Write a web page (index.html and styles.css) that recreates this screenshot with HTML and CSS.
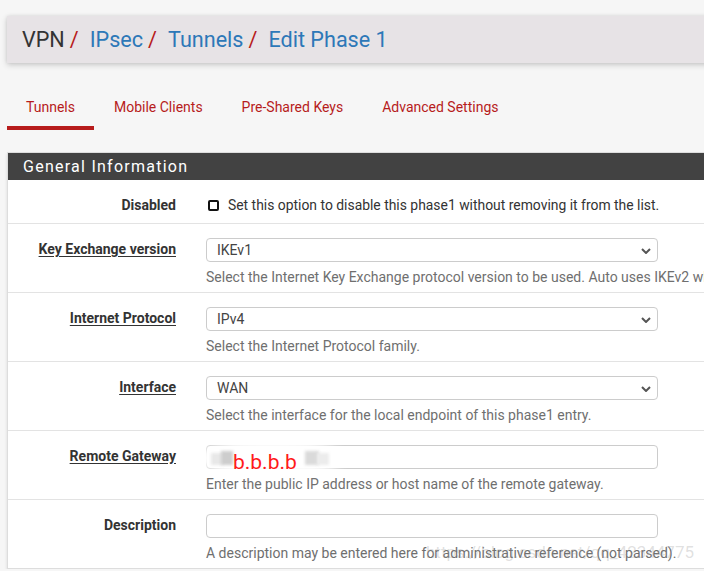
FILE: index.html
```html
<!DOCTYPE html>
<html>
<head>
<meta charset="utf-8">
<link rel="stylesheet" href="styles.css">
</head>
<body>
<div class="page">
  <header class="crumbs">
    <h1><span class="dark">VPN</span><span class="sep">/</span><a href="#">IPsec</a><span class="sep">/</span><a href="#">Tunnels</a><span class="sep">/</span><a href="#">Edit Phase 1</a></h1>
  </header>

  <nav class="tabs">
    <a class="tab active" href="#">Tunnels</a>
    <a class="tab" href="#">Mobile Clients</a>
    <a class="tab" href="#">Pre-Shared Keys</a>
    <a class="tab" href="#">Advanced Settings</a>
  </nav>

  <section class="panel">
    <h2 class="panel-head">General Information</h2>
    <div class="panel-body">
      <div class="row row-short">
        <div class="label">Disabled</div>
        <div class="field">
          <label class="check"><span class="box"></span>Set this option to disable this phase1 without removing it from the list.</label>
        </div>
      </div>
      <div class="row">
        <div class="label"><span class="ul">Key Exchange version</span></div>
        <div class="field">
          <div class="select">IKEv1<svg class="chev" viewBox="0 0 10 6" width="10" height="6"><path d="M1 1 L5 5 L9 1" fill="none" stroke="#555" stroke-width="2"/></svg></div>
          <div class="help">Select the Internet Key Exchange protocol version to be used. Auto uses IKEv2 when initiator, and accepts either IKEv1 or IKEv2 as responder.</div>
        </div>
      </div>
      <div class="row">
        <div class="label"><span class="ul">Internet Protocol</span></div>
        <div class="field">
          <div class="select">IPv4<svg class="chev" viewBox="0 0 10 6" width="10" height="6"><path d="M1 1 L5 5 L9 1" fill="none" stroke="#555" stroke-width="2"/></svg></div>
          <div class="help">Select the Internet Protocol family.</div>
        </div>
      </div>
      <div class="row">
        <div class="label"><span class="ul">Interface</span></div>
        <div class="field">
          <div class="select">WAN<svg class="chev" viewBox="0 0 10 6" width="10" height="6"><path d="M1 1 L5 5 L9 1" fill="none" stroke="#555" stroke-width="2"/></svg></div>
          <div class="help">Select the interface for the local endpoint of this phase1 entry.</div>
        </div>
      </div>
      <div class="row">
        <div class="label"><span class="ul">Remote Gateway</span></div>
        <div class="field">
          <div class="input gw">
            <span class="smudge"></span>
            <span class="blk b1"></span><span class="blk b2"></span><span class="blk b3"></span><span class="blk b4"></span>
            <span class="redtxt">b.b.b.b</span>
          </div>
          <div class="help">Enter the public IP address or host name of the remote gateway.</div>
        </div>
      </div>
      <div class="row">
        <div class="label">Description</div>
        <div class="field">
          <div class="input"></div>
          <div class="help">A description may be entered here for administrative reference (not parsed).</div>
        </div>
      </div>
    </div>
    <div class="watermark">https://blog.csdn.net/qq_42344775</div>
  </section>
</div>
</body>
</html>
```

FILE: styles.css
```css
html, body {
  margin: 0;
  padding: 0;
  background: #f6f6f6;
  overflow: hidden;
}
body {
  font-family: Roboto, "Liberation Sans", sans-serif;
  font-size: 14px;
  color: #333;
}
.page {
  padding: 16px 0 0 7px;
  width: 920px;
}
.crumbs {
  height: 47px;
  background: #e7e3e6;
  box-shadow: 0 2px 6px rgba(0,0,0,0.18), 0 0 3px rgba(0,0,0,0.08);
  display: flex;
  align-items: center;
  padding-left: 15px;
}
.crumbs h1 {
  margin: 0;
  font-weight: 400;
  font-size: 21.6px;
  line-height: 1;
  padding-top: 1px;
}
.crumbs .dark { color: #333; }
.crumbs .sep { color: #b71c1c; margin: 0 11px 0 5px; }
.crumbs a { color: #2d78b8; text-decoration: none; }

.tabs {
  display: flex;
  margin-top: 27px;
}
.tab {
  color: #b71c1c;
  text-decoration: none;
  font-size: 14px;
  padding: 9px 19px 10px 19px;
  margin-right: 1px;
  border-bottom: 4px solid transparent;
  line-height: 17px;
}
.tab.active { border-bottom-color: #b71c1c; }

.panel {
  margin-top: 22px;
  position: relative;
  background: #fff;
  border: 1px solid #ddd;
  box-shadow: 0 2px 3px rgba(0,0,0,0.12);
}
.panel-head {
  margin: 0;
  background: #424242;
  color: #fff;
  font-weight: 400;
  font-size: 16px;
  letter-spacing: 1.25px;
  height: 27px;
  line-height: 27px;
  padding-left: 15px;
}
.row {
  display: flex;
  border-top: 1px solid #e3e3e3;
  padding: 14px 0 7px 0;
}
.row:first-child { border-top: 0; }
.row-short {
  padding: 17px 0 9px 0;
}
.label {
  width: 168px;
  flex: none;
  text-align: right;
  font-weight: 700;
  color: #333;
  line-height: 17px;
  padding-top: 3px;
}
.row-short .label { padding-top: 0; }
.ul { text-decoration: underline; text-underline-offset: 2px; }
.field {
  margin-left: 30px;
  flex: 1;
}
.check {
  display: flex;
  align-items: center;
  line-height: 17px;
  color: #333;
  font-size: 13.9px;
}
.box {
  width: 7px;
  height: 7px;
  border: 2px solid #111;
  border-radius: 2px;
  margin: 0 9px 0 2px;
}
.select, .input {
  width: 440px;
  height: 22px;
  border: 1px solid #ccc;
  border-radius: 4px;
  background: #fff;
  padding: 0 0 0 10px;
  display: flex;
  align-items: center;
  position: relative;
  color: #444;
  line-height: 22px;
}
.chev {
  position: absolute;
  right: 6px;
  top: 9px;
}
.help {
  color: #6f6f6f;
  margin-top: 7px;
  line-height: 16px;
  white-space: nowrap;
}
.smudge {
  position: absolute;
  left: -10px;
  top: -6px;
  width: 150px;
  height: 36px;
  background: rgba(255,255,255,0.92);
  border-radius: 50%;
  filter: blur(3px);
}
.blk {
  position: absolute;
  filter: blur(1.5px);
}
.b1 { left: 4px; top: 7px; width: 12px; height: 12px; background: #e8e8e8; }
.b2 { left: 14px; top: 5px; width: 12px; height: 14px; background: #cdcdcd; }
.b3 { left: 98px; top: 5px; width: 14px; height: 14px; background: #dadada; }
.b4 { left: 110px; top: 7px; width: 12px; height: 12px; background: #ececec; }
.redtxt {
  position: absolute;
  left: 26px;
  top: 4px;
  color: #ff1a1a;
  font-size: 21px;
  line-height: 24px;
}
.watermark {
  position: absolute;
  left: 418px;
  top: 389px;
  color: rgba(150,150,150,0.3);
  font-size: 17px;
  white-space: nowrap;
}
```
